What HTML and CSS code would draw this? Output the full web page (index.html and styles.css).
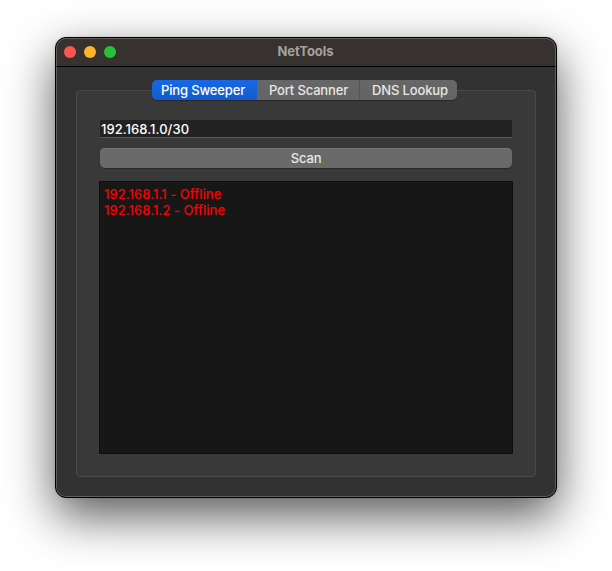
FILE: index.html
```html
<!DOCTYPE html>
<html lang="en">
<head>
<meta charset="utf-8">
<title>NetTools</title>
<link rel="stylesheet" href="styles.css">
</head>
<body>
<main class="window">
  <header class="titlebar">
    <div class="lights"><i class="light close"></i><i class="light minimize"></i><i class="light maximize"></i></div>
    <h1 class="title">NetTools</h1>
  </header>
  <section class="content">
    <div class="panel">
      <nav class="tabs">
        <button class="tab active">Ping Sweeper</button>
        <button class="tab port">Port Scanner</button>
        <button class="tab dns">DNS Lookup</button>
      </nav>
      <div class="field">192.168.1.0/30</div>
      <button class="scan">Scan</button>
      <ul class="results">
        <li>192.168.1.1 - Offline</li>
        <li>192.168.1.2 - Offline</li>
      </ul>
    </div>
  </section>
</main>
</body>
</html>
```
FILE: styles.css
```css
* { box-sizing: border-box; }
body {
  margin: 0;
  height: 571px;
  padding: 37px 55px 73px;
  overflow: hidden;
  background: #fff;
  font: 500 13px/16px Inter, "Liberation Sans", sans-serif;
}
button { border: 0; padding: 0; font: inherit; color: inherit; }
.window {
  display: flex;
  flex-direction: column;
  width: 502px;
  height: 461px;
  border: 1px solid #000;
  border-radius: 11px;
  overflow: hidden;
  position: relative;
  background: #323232;
  box-shadow: 0 18px 48px rgba(0, 0, 0, .66), 0 0 3px rgba(0, 0, 0, .12);
}
.window::after {
  content: "";
  position: absolute;
  inset: 0;
  border: 1px solid rgba(255, 255, 255, .22);
  border-radius: 10px;
  pointer-events: none;
}
.titlebar {
  display: grid;
  grid-template-columns: 1fr auto 1fr;
  align-items: center;
  height: 29px;
  flex: none;
  border-bottom: 1px solid #000;
  background: #373230;
}
.lights { display: flex; gap: 8px; padding-left: 8px; }
.light { width: 12px; height: 12px; border-radius: 50%; }
.close { background: #ff5450; }
.minimize { background: #ffb52b; }
.maximize { background: #27c138; }
.title { margin: 0; padding: 0 1px 2px 0; font-size: 13px; font-weight: 700; line-height: 16px; letter-spacing: -.05px; color: #a5a19f; }
.content { flex: 1; padding: 23px 20px 20px; }
.panel {
  display: flex;
  flex-direction: column;
  height: 387px;
  border: 1px solid #494949;
  border-radius: 4px;
  padding: 0 22px 22px;
  background: #393939;
}
.tabs {
  display: grid;
  grid-template-columns: 105px 102px 98px;
  align-self: center;
  width: 305px;
  height: 20px;
  margin: -11px 3px 0 0;
  border-radius: 5px;
  overflow: hidden;
  color: #e6e6e6;
  box-shadow: 0 1px 1px rgba(0, 0, 0, .3);
}
.tab { height: 20px; letter-spacing: -.15px; background: linear-gradient(#676767, #646464); }
.tab.active { padding-right: 3px; color: #fff; background: linear-gradient(#1767e6, #125cce); }
.tab.dns { padding-left: 3px; border-left: 1px solid #555; }
.tab.port { padding-left: 1px; }
.field {
  height: 18px;
  margin: 20px 1px 10px;
  padding-left: 1px;
  background: #222;
  border-bottom: 1px solid #595959;
  line-height: 19px;
  letter-spacing: .05px;
  color: #fff;
}
.scan {
  height: 20px;
  flex: none;
  margin: 0 1px 13px;
  border-radius: 5px;
  background: #6a6a6a;
  box-shadow: inset 0 1px #747474, 0 1px 1px rgba(0, 0, 0, .3);
  letter-spacing: -.15px;
  color: #e8e8e8;
}
.results {
  height: 273px;
  margin: 0;
  padding: 4px;
  list-style: none;
  border: 1px solid #0e0e0e;
  background: #171717;
  letter-spacing: .04px;
  color: #fa0000;
}
```
